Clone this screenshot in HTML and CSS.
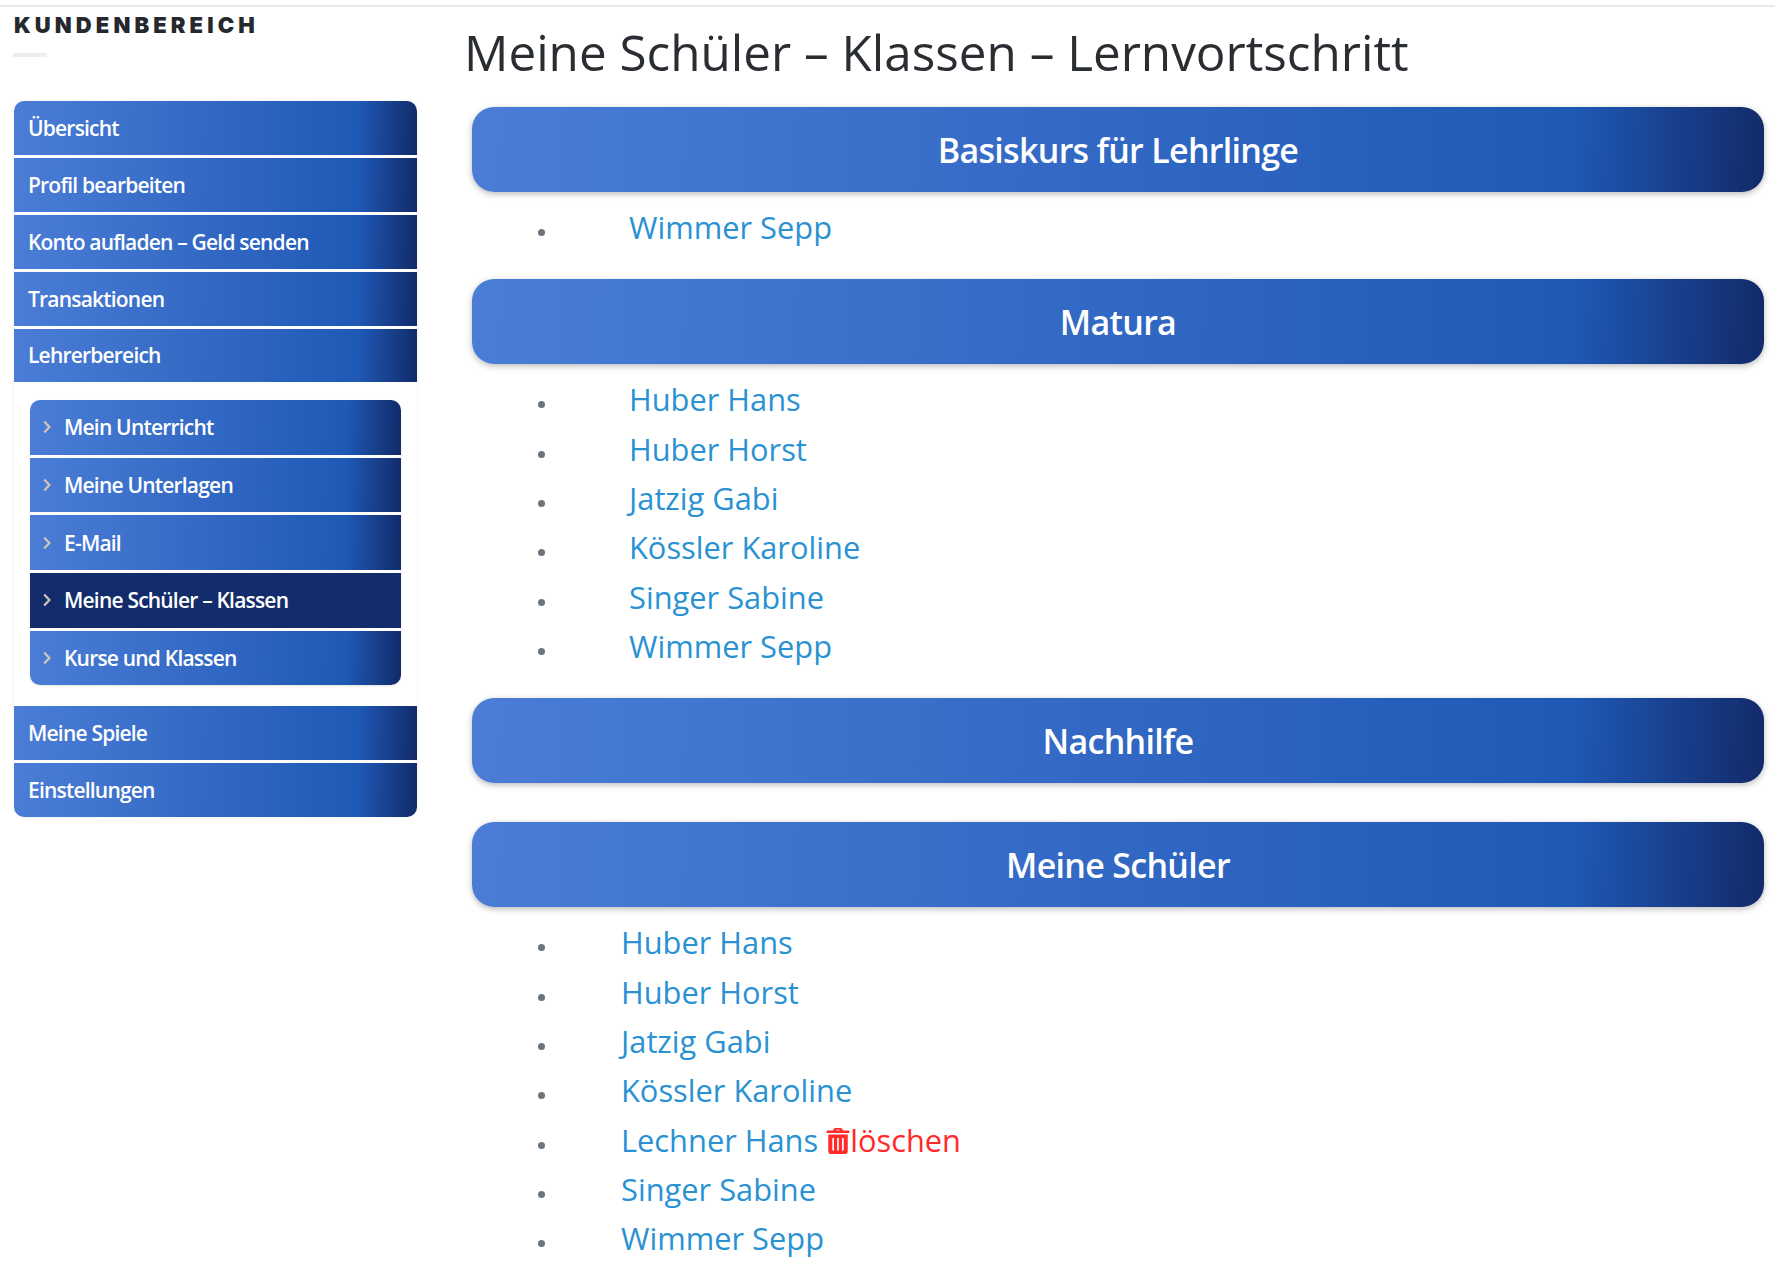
FILE: index.html
```
<!DOCTYPE html>
<html lang="de">
<head>
<meta charset="utf-8">
<title>Meine Schüler – Klassen – Lernvortschritt</title>
<link rel="stylesheet" href="styles.css">
</head>
<body>
<div class="page">
  <aside class="sidebar">
    <div class="brand">KUNDENBEREICH</div>
    <div class="brand-rule"></div>
    <nav class="menu">
      <a class="item">Übersicht</a>
      <a class="item">Profil bearbeiten</a>
      <a class="item">Konto aufladen – Geld senden</a>
      <a class="item">Transaktionen</a>
      <a class="item parent">Lehrerbereich</a>
      <div class="submenu">
        <a class="subitem"><svg class="chev" viewBox="0 0 8 14"><path d="M1.2 1.5 6.4 7l-5.2 5.5"/></svg>Mein Unterricht</a>
        <a class="subitem"><svg class="chev" viewBox="0 0 8 14"><path d="M1.2 1.5 6.4 7l-5.2 5.5"/></svg>Meine Unterlagen</a>
        <a class="subitem"><svg class="chev" viewBox="0 0 8 14"><path d="M1.2 1.5 6.4 7l-5.2 5.5"/></svg>E-Mail</a>
        <a class="subitem active"><svg class="chev" viewBox="0 0 8 14"><path d="M1.2 1.5 6.4 7l-5.2 5.5"/></svg>Meine Schüler – Klassen</a>
        <a class="subitem"><svg class="chev" viewBox="0 0 8 14"><path d="M1.2 1.5 6.4 7l-5.2 5.5"/></svg>Kurse und Klassen</a>
      </div>
      <a class="item">Meine Spiele</a>
      <a class="item">Einstellungen</a>
    </nav>
  </aside>
  <main class="content">
    <h1 class="title">Meine Schüler – Klassen – Lernvortschritt</h1>
    <h2 class="band">Basiskurs für Lehrlinge</h2>
    <ul class="students">
      <li><a>Wimmer Sepp</a></li>
    </ul>
    <h2 class="band">Matura</h2>
    <ul class="students">
      <li><a>Huber Hans</a></li>
      <li><a>Huber Horst</a></li>
      <li><a>Jatzig Gabi</a></li>
      <li><a>Kössler Karoline</a></li>
      <li><a>Singer Sabine</a></li>
      <li><a>Wimmer Sepp</a></li>
    </ul>
    <h2 class="band">Nachhilfe</h2>
    <ul class="students"></ul>
    <h2 class="band">Meine Schüler</h2>
    <ul class="students own">
      <li><a>Huber Hans</a></li>
      <li><a>Huber Horst</a></li>
      <li><a>Jatzig Gabi</a></li>
      <li><a>Kössler Karoline</a></li>
      <li><a>Lechner Hans</a> <span class="delete"><svg class="trash" viewBox="0 0 448 512"><path fill-rule="evenodd" d="M32 128h384v336a48 48 0 0 1-48 48H80a48 48 0 0 1-48-48zm272 80a16 16 0 0 1 32 0v224a16 16 0 0 1-32 0zm-96 0a16 16 0 0 1 32 0v224a16 16 0 0 1-32 0zm-96 0a16 16 0 0 1 32 0v224a16 16 0 0 1-32 0zM16 48h104l28-36a32 32 0 0 1 25-12h102a32 32 0 0 1 25 12l28 36h104a16 16 0 0 1 16 16v32H0V64a16 16 0 0 1 16-16zm168 0h80l-12-14h-56z"/></svg>löschen</span></li>
      <li><a>Singer Sabine</a></li>
      <li><a>Wimmer Sepp</a></li>
    </ul>
  </main>
</div>
</body>
</html>
```
FILE: styles.css
```
* { box-sizing: border-box; }
html, body { margin: 0; padding: 0; background: #fff; height: 1270px; overflow: hidden; }
body { font-family: "Open Sans", "Liberation Sans", sans-serif; color: #212529; }
.page {
  display: flex;
  margin-top: 5px;
  border-top: 2px solid #e9e9e9;
  padding-left: 14px;
}
.sidebar { width: 403px; flex: none; padding-top: 8px; }
.brand {
  font-family: Inter, "Liberation Sans", sans-serif;
  font-weight: 900;
  font-size: 22px;
  line-height: 20px;
  letter-spacing: 4.1px;
  color: #25282c;
}
.brand-rule { width: 34px; height: 4px; background: #eceef1; margin: 18px 0 0 -1px; }
.menu {
  margin-top: 44px;
  display: flex;
  flex-direction: column;
  border-radius: 10px;
  box-shadow: 0 0 3px rgba(0,0,0,.08);
}
.item, .subitem {
  display: flex;
  align-items: center;
  color: #fff;
  font-weight: 600;
  font-size: 21px;
  letter-spacing: -.8px;
  background: linear-gradient(92deg, #4b7dd6 0%, #1f59b6 85%, #122a69 100%);
}
.item { height: 54px; padding: 0 0 1px 14px; margin-bottom: 3px; }
.item:first-child { border-radius: 10px 10px 0 0; }
.item:last-child { border-radius: 0 0 10px 10px; margin-bottom: 0; }
.item.parent { height: 53px; margin-bottom: 0; }
.submenu {
  margin: 18px 16px 21px;
  display: flex;
  flex-direction: column;
  border-radius: 10px;
  box-shadow: 0 1px 2px rgba(0,0,0,.12);
}
.subitem { height: 54.67px; margin-bottom: 3px; }
.subitem:first-child { border-radius: 10px 10px 0 0; }
.subitem:last-child { border-radius: 0 0 10px 10px; margin-bottom: 0; }
.subitem.active { background: #132c6b; }
.chev {
  width: 8px;
  height: 14px;
  margin: 0 13px 0 13px;
  fill: none;
  stroke: #cfc6b8;
  stroke-width: 2.2;
}
.content { flex: 1; min-width: 0; padding: 0 11px 0 49px; }
.title {
  margin: 16px 0 26px -2px;
  font-weight: 400;
  font-size: 49.4px;
  line-height: 58px;
  color: #2a2e33;
}
.band {
  margin: 0 0 0 6px;
  height: 85px;
  border-radius: 22px;
  display: flex;
  align-items: center;
  justify-content: center;
  color: #fff;
  font-weight: 600;
  font-size: 34px;
  letter-spacing: -.7px;
  background: linear-gradient(92deg, #4b7dd6 0%, #1f59b6 85%, #122a69 100%);
  box-shadow: 0 2px 6px rgba(0,0,0,.28);
}
.students {
  margin: 0;
  padding: 11px 0 27.2px 72px;
  list-style: none;
  font-size: 30.8px;
  line-height: 49.3px;
}
.students:empty { padding-bottom: 28px; }
.students li::before {
  content: "";
  display: inline-block;
  width: 7px;
  height: 7px;
  border-radius: 50%;
  background: #6c757d;
  margin-right: 84px;
  vertical-align: 3px;
}
.students a { color: #2a92d3; }
.students.own li::before { margin-right: 76px; }
.delete { color: #ff2a2a; }
.trash { width: 24px; height: 26px; fill: #ff2a2a; vertical-align: -2.500px; }
```
